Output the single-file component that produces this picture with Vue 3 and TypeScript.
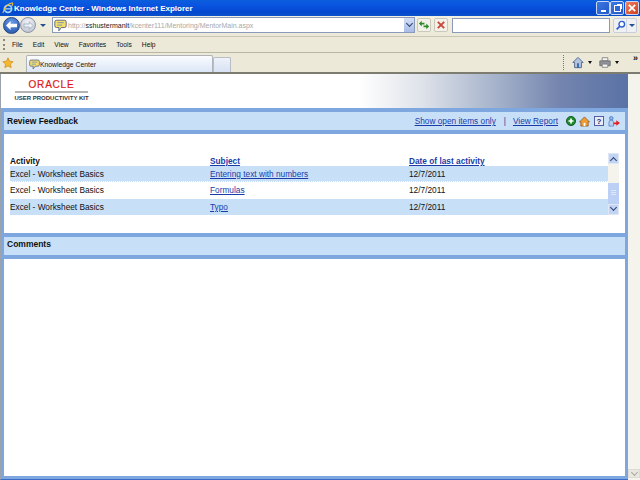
<script setup lang="ts">
interface Row {
  activity: string
  subject: string
  date: string
}

const rows: Row[] = [
  { activity: 'Excel - Worksheet Basics', subject: 'Entering text with numbers', date: '12/7/2011' },
  { activity: 'Excel - Worksheet Basics', subject: 'Formulas', date: '12/7/2011' },
  { activity: 'Excel - Worksheet Basics', subject: 'Typo', date: '12/7/2011' }
]

const menus = ['File', 'Edit', 'View', 'Favorites', 'Tools', 'Help']
</script>

<template>
  <div class="window">
    <div class="titlebar">
      <svg class="ie-logo" width="12" height="14" viewBox="0 0 14 14">
        <circle cx="7" cy="8" r="4.2" fill="none" stroke="#9fd4ff" stroke-width="2" />
        <path d="M3 8h8" stroke="#9fd4ff" stroke-width="1.5" />
        <path d="M1 13C2 7 7 2 12 1c1.5 1 0 3-1 4" fill="none" stroke="#f2c430" stroke-width="1.2" />
      </svg>
      <span class="title">Knowledge Center - Windows Internet Explorer</span>
      <div class="win-buttons">
        <span class="win-btn"><i class="min-mark"></i></span>
        <span class="win-btn"><i class="restore-mark"></i></span>
        <span class="win-btn close">
          <svg width="10" height="10" viewBox="0 0 11 11"><path d="M2 2l7 7M9 2l-7 7" stroke="#fff" stroke-width="2" /></svg>
        </span>
      </div>
    </div>

    <div class="addressbar">
      <div class="nav-pill">
        <span class="nav back">
          <svg width="13" height="11" viewBox="0 0 14 12"><path d="M1 6l5-5v3h7v4H6v3z" fill="#fff" /></svg>
        </span>
        <span class="nav forward">
          <svg width="11" height="9" viewBox="0 0 14 12"><path d="M13 6L8 1v3H1v4h7v3z" fill="#eef2f8" stroke="#9aa6b8" /></svg>
        </span>
      </div>
      <i class="arrow blue"></i>
      <div class="url-box">
        <svg class="bubble" width="13" height="13" viewBox="0 0 16 15">
          <path d="M3 1h10a2 2 0 012 2v5a2 2 0 01-2 2H9l-3 4v-4H3a2 2 0 01-2-2V3a2 2 0 012-2z" fill="#f5de6a" stroke="#44507a" />
          <path d="M4 4h8M4 7h6" stroke="#5a86c8" />
        </svg>
        <span class="url"><span class="dim">http://</span>sshustermanlt<span class="dim">/kcenter111/Mentoring/MentorMain.aspx</span></span>
        <span class="url-drop"><i class="chev"></i></span>
      </div>
      <span class="tool-btn">
        <svg width="12" height="12" viewBox="0 0 13 13"><path d="M1 5l3-3v2h3v2H4v2zM12 8L9 11V9H6V7h3V5z" fill="#2c8a2c" /></svg>
      </span>
      <span class="tool-btn">
        <svg width="10" height="10" viewBox="0 0 11 11"><path d="M2 2l7 7M9 2l-7 7" stroke="#c8453a" stroke-width="2" /></svg>
      </span>
      <div class="search-box"></div>
      <div class="search-btns">
        <span class="search-go">
          <svg width="11" height="11" viewBox="0 0 13 13">
            <circle cx="8" cy="5" r="3.3" fill="#fff" stroke="#2a5fd0" stroke-width="1.6" />
            <path d="M5.5 7.5L2 11" stroke="#2a5fd0" stroke-width="2" />
          </svg>
        </span>
        <span class="search-drop"><i class="arrow blue"></i></span>
      </div>
    </div>

    <div class="menubar">
      <i class="grip"></i>
      <span v-for="m in menus" :key="m" class="menu-item">{{ m }}</span>
    </div>

    <div class="tabbar">
      <svg class="star" width="12" height="12" viewBox="0 0 14 14">
        <path d="M7 1l1.8 3.9 4.2.5-3.1 2.9.8 4.2L7 10.4l-3.700 2.100.8-4.200L1 5.400l4.200-.5z" fill="#f5b82e" stroke="#c98a18" stroke-width=".8" />
      </svg>
      <div class="tab">
        <svg width="11" height="11" viewBox="0 0 16 15">
          <path d="M3 1h10a2 2 0 012 2v5a2 2 0 01-2 2H9l-3 4v-4H3a2 2 0 01-2-2V3a2 2 0 012-2z" fill="#f5de6a" stroke="#44507a" />
          <path d="M4 4h8M4 7h6" stroke="#5a86c8" />
        </svg>
        <span>Knowledge Center</span>
      </div>
      <div class="new-tab"></div>
      <div class="tab-tools">
        <i class="dots"></i>
        <svg width="12" height="13" viewBox="0 0 14 14">
          <path d="M1 7l6-6 6 6h-2v6H3V7z" fill="#b4c4de" stroke="#4a6088" />
          <path d="M6 8h2v5H6z" fill="#2a5fa8" />
        </svg>
        <i class="arrow black"></i>
        <svg class="printer" width="12" height="13" viewBox="0 0 15 14">
          <path d="M4 1h7v4H4z" fill="#f4f4f4" stroke="#777" />
          <path d="M1 5h13v6H1z" fill="#8e949c" stroke="#666" />
          <path d="M4 9h7v4H4z" fill="#f4f4f4" stroke="#777" />
        </svg>
        <i class="arrow black"></i>
        <span class="more">»</span>
      </div>
    </div>

    <div class="viewport">
      <div class="page">
        <div class="brand">
          <div class="logo">
            <span class="oracle">ORACLE</span>
            <span class="upk">USER PRODUCTIVITY KIT</span>
          </div>
        </div>

        <div class="panel-head">
          <b>Review Feedback</b>
          <div class="actions">
            <a>Show open items only</a>
            <span class="sep">|</span>
            <a>View Report</a>
            <div class="icons">
              <svg width="10" height="10" viewBox="0 0 12 12">
                <circle cx="6" cy="6" r="5.5" fill="#1d8a2c" stroke="#10501a" />
                <path d="M6 3v6M3 6h6" stroke="#fff" stroke-width="2" />
              </svg>
              <svg width="11" height="11" viewBox="0 0 12 12">
                <path d="M0.5 6.5L6 1l5.5 5.500H10V11H2V6.500z" fill="#ed9c35" stroke="#8a5414" stroke-width=".8" />
                <path d="M5 7.500h2V11H5z" fill="#fff" />
              </svg>
              <span class="help">?</span>
              <svg width="12" height="11" viewBox="0 0 13 12">
                <circle cx="3.5" cy="2.5" r="2" fill="#8fb4e8" stroke="#3a6cc0" stroke-width=".7" />
                <path d="M1 11V7a2.5 2.5 0 015 0v4z" fill="#b8d0f0" stroke="#3a6cc0" stroke-width=".7" />
                <path d="M6 7h3V4.500L13 7.500 9 10.500V9H6z" fill="#e02020" />
              </svg>
            </div>
          </div>
        </div>

        <div class="list-area">
          <div class="list">
            <div class="list-table">
              <div class="row head">
                <b>Activity</b>
                <a>Subject</a>
                <a>Date of last activity</a>
              </div>
              <div v-for="(row, i) in rows" :key="row.subject" class="row" :class="{ striped: i % 2 === 0 }">
                <span>{{ row.activity }}</span>
                <a>{{ row.subject }}</a>
                <span>{{ row.date }}</span>
              </div>
            </div>
            <div class="list-scroll">
              <span class="sb-btn"><i class="chev up"></i></span>
              <span class="sb-track"></span>
              <span class="sb-thumb"><i class="ridge"></i></span>
              <span class="sb-btn"><i class="chev"></i></span>
            </div>
          </div>
        </div>

        <div class="panel-head comments"><b>Comments</b></div>
        <div class="comments-body"></div>
      </div>

      <div class="page-scroll">
        <span class="page-sb-btn"><i class="chev grey"></i></span>
      </div>
    </div>
  </div>
</template>

<style>
html,
body {
  margin: 0;
  overflow: hidden;
}
</style>

<style scoped>
.window {
  width: 640px;
  height: 480px;
  display: flex;
  flex-direction: column;
  overflow: hidden;
  font-family: 'Liberation Sans', Arial, sans-serif;
  font-size: 8.3px;
  color: #111;
  background: #ece9d8;
}

.titlebar {
  height: 16px;
  flex-shrink: 0;
  display: flex;
  align-items: center;
  padding: 0 1px 0 2px;
  background: linear-gradient(#0a5fdc, #0a55e0 30%, #0447d0 75%, #0a50c8);
  color: #fff;
}

.ie-logo {
  flex-shrink: 0;
}

.title {
  font-size: 8px;
  font-weight: bold;
}

.win-buttons {
  margin-left: auto;
  display: flex;
  gap: 0;
}

.win-btn {
  width: 14px;
  height: 14px;
  box-sizing: border-box;
  display: flex;
  align-items: center;
  justify-content: center;
  border: 1px solid #c8d8f4;
  border-radius: 2px;
  background: linear-gradient(135deg, #3c78e4, #2358c8);
}

.win-btn.close {
  margin-left: 1px;
  background: linear-gradient(135deg, #ec8060, #d0401c);
}

.min-mark {
  width: 5px;
  height: 2px;
  margin-top: 6px;
  background: #fff;
}

.restore-mark {
  width: 5px;
  height: 5px;
  border: 1px solid #fff;
  box-shadow: 2px -2px 0 -1px #fff;
}

.addressbar {
  height: 21px;
  flex-shrink: 0;
  display: flex;
  align-items: center;
  padding: 0 3px 2px;
  background: linear-gradient(#f2f0e2, #ece9d8);
  border-bottom: 1px solid #c8c6b4;
  box-sizing: border-box;
}

.nav-pill {
  display: flex;
  align-items: center;
}

.nav {
  display: flex;
  align-items: center;
  justify-content: center;
  border-radius: 50%;
}

.nav.back {
  width: 17px;
  height: 17px;
  background: radial-gradient(circle at 50% 30%, #6a9ce8, #1f4fa8);
  border: 1px solid #27457e;
  box-sizing: border-box;
}

.nav.forward {
  width: 16px;
  height: 16px;
  background: radial-gradient(circle at 50% 30%, #f2f4f8, #b4bccc);
  border: 1px solid #8c96a8;
  box-sizing: border-box;
}

.arrow {
  display: inline-block;
  width: 0;
  height: 0;
  border-left: 3px solid transparent;
  border-right: 3px solid transparent;
}

.arrow.blue {
  border-top: 3px solid #27508e;
  margin: 0 6px 0 4px;
}

.arrow.black {
  border-top: 3px solid #111;
  border-left-width: 2px;
  border-right-width: 2px;
}

.url-box {
  width: 363px;
  height: 16px;
  flex-shrink: 0;
  display: flex;
  align-items: center;
  background: #fff;
  border: 1px solid #8a9ab8;
  box-sizing: border-box;
}

.bubble {
  margin: 0 1px;
  flex-shrink: 0;
}

.url {
  font-size: 7px;
  white-space: nowrap;
  color: #222;
}

.dim {
  color: #a8a8a8;
}

.url-drop {
  margin-left: auto;
  width: 10px;
  height: 14px;
  display: flex;
  align-items: center;
  justify-content: center;
  background: linear-gradient(#d4def4, #a8bce8);
}

.chev {
  width: 4px;
  height: 4px;
  margin-top: -3px;
  border-right: 1.5px solid #2a4070;
  border-bottom: 1.5px solid #2a4070;
  transform: rotate(45deg);
}

.chev.up {
  margin-top: 3px;
  transform: rotate(225deg);
}

.chev.grey {
  border-color: #a8a8a0;
}

.tool-btn {
  width: 14px;
  height: 14px;
  margin-left: 2px;
  box-sizing: border-box;
  display: flex;
  align-items: center;
  justify-content: center;
  background: #f4f2e8;
  border: 1px solid #c8c8bc;
  border-radius: 2px;
}

.tool-btn + .tool-btn {
  margin-left: 3px;
}

.search-box {
  width: 160px;
  height: 15px;
  margin-left: 4px;
  background: #fff;
  border: 1px solid #8a9ab8;
  box-sizing: border-box;
}

.search-btns {
  margin-left: 3px;
  display: flex;
  height: 15px;
  border: 1px solid #c8cedc;
  border-radius: 2px;
  box-sizing: border-box;
  background: #eef0f4;
}

.search-go {
  width: 12px;
  display: flex;
  align-items: center;
  justify-content: center;
}

.search-drop {
  width: 9px;
  display: flex;
  align-items: center;
  justify-content: center;
  border-left: 1px solid #d4d8e4;
}

.search-drop .arrow.blue {
  margin: 0;
}

.menubar {
  height: 16px;
  flex-shrink: 0;
  display: flex;
  align-items: center;
  padding-left: 3px;
  background: #ece9d8;
  border-bottom: 1px solid #b8b6a4;
  box-sizing: border-box;
  font-size: 6.7px;
}

.grip {
  width: 0;
  height: 11px;
  margin-right: 7px;
  border-left: 2px dotted #8a8878;
}

.menu-item {
  margin-right: 10px;
}

.tabbar {
  height: 21px;
  flex-shrink: 0;
  display: flex;
  align-items: flex-end;
  padding-left: 2px;
  background: #ece9d8;
  border-bottom: 2px solid #7c7c70;
  box-sizing: border-box;
}

.star {
  align-self: center;
  margin-right: 12px;
}

.tab {
  width: 187px;
  height: 17px;
  display: flex;
  align-items: center;
  padding-left: 2px;
  box-sizing: border-box;
  font-size: 6.8px;
  background: linear-gradient(#fafcff, #dbe6f6);
  border: 1px solid #b0b4b8;
  border-bottom: none;
  border-radius: 2px 2px 0 0;
}

.new-tab {
  width: 18px;
  height: 15px;
  background: linear-gradient(#eef2fa, #d8e2f4);
  border: 1px solid #b8bcc4;
  border-bottom: none;
  border-radius: 2px 2px 0 0;
  box-sizing: border-box;
}

.tab-tools {
  margin-left: auto;
  align-self: center;
  position: relative;
  display: flex;
  align-items: center;
  gap: 4px;
  padding-right: 21px;
}

.dots {
  height: 15px;
  margin-right: 4px;
  border-left: 1px dotted #777;
}

.printer {
  margin-left: 3px;
}

.more {
  position: absolute;
  right: 2px;
  top: -2px;
  font-size: 9px;
  font-weight: bold;
}

.viewport {
  flex: 1;
  min-height: 0;
  display: flex;
}

.page {
  flex: 1;
  min-width: 0;
  display: flex;
  flex-direction: column;
  background: #fff;
  border-left: 1px solid #9aa2ac;
  border-bottom: 1px solid #3c6cc8;
}

.page-scroll {
  width: 12px;
  display: flex;
  flex-direction: column;
  justify-content: flex-end;
  padding-bottom: 2px;
  background: #f4f3ec;
}

.page-sb-btn {
  height: 9px;
  display: flex;
  align-items: center;
  justify-content: center;
  background: #e8e8e0;
  border: 1px solid #dcdcd4;
  box-sizing: border-box;
}

.brand {
  height: 34px;
  flex-shrink: 0;
  padding-left: 14px;
  display: flex;
  align-items: center;
  background: linear-gradient(90deg, #fff 0, #fff 57%, #dfe3ea 67%, #a0aec8 80%, #7485af 89%, #5a72a6 100%);
}

.logo {
  width: 73px;
  display: flex;
  flex-direction: column;
  align-items: center;
}

.oracle {
  font-size: 10px;
  color: #e01818;
  -webkit-text-stroke: 0.2px #e01818;
  letter-spacing: 0.8px;
  line-height: 9px;
  padding-bottom: 2px;
  width: 100%;
  text-align: center;
  border-bottom: 2px solid #b4b4b4;
  margin-bottom: 1px;
}

.upk {
  font-size: 6px;
  font-weight: bold;
  white-space: nowrap;
  color: #333;
  line-height: 8px;
}

.panel-head {
  height: 26px;
  flex-shrink: 0;
  box-sizing: border-box;
  display: flex;
  align-items: center;
  justify-content: space-between;
  padding: 0 5px 0 3px;
  background: #c8dff8;
  border: solid #7ea7e0;
  border-width: 4px 3px 4px 3px;
}

.panel-head b {
  font-size: 8.5px;
}

.panel-head.comments {
  padding-bottom: 4px;
}

.actions {
  display: flex;
  align-items: center;
}

a {
  color: #1a3ca8;
  text-decoration: underline;
}

.sep {
  margin: 0 7px 0 8px;
  color: #1a3ca8;
}

.icons {
  display: flex;
  align-items: center;
  gap: 3px;
  margin-left: 8px;
}

.help {
  width: 10px;
  height: 10px;
  box-sizing: border-box;
  display: flex;
  align-items: center;
  justify-content: center;
  font-size: 8px;
  font-weight: bold;
  color: #1a2a70;
  background: #e8ecf8;
  border: 1px solid #5060a0;
  margin: 0 1px;
}

.list-area {
  height: 99px;
  flex-shrink: 0;
  box-sizing: border-box;
  padding: 19px 6px 0 6px;
  border-left: 3px solid #7ea7e0;
  border-right: 3px solid #7ea7e0;
}

.list {
  display: flex;
}

.list-table {
  flex: 1;
  min-width: 0;
}

.row {
  display: grid;
  grid-template-columns: 200px 199px 1fr;
  align-items: center;
  height: 16.33px;
  white-space: nowrap;
  border-bottom: 1px dotted #fff;
  box-sizing: border-box;
}

.row:last-child {
  border-bottom: none;
}

.row.head {
  height: 13px;
  align-items: end;
  border: none;
  line-height: 9px;
}

.row.head a {
  font-weight: bold;
}

.striped {
  background: #c8dff8;
}

.list-scroll {
  position: relative;
  width: 11px;
  flex-shrink: 0;
  display: flex;
  flex-direction: column;
  background: #f4f3ec;
}

.sb-btn {
  height: 11px;
  flex-shrink: 0;
  display: flex;
  align-items: center;
  justify-content: center;
  background: #c2d4f4;
  border: 1px solid #dfe6f4;
  box-sizing: border-box;
}

.sb-track {
  flex: 1;
}

.sb-thumb {
  position: absolute;
  left: 0;
  right: 0;
  bottom: 11px;
  height: 21px;
  display: flex;
  align-items: center;
  justify-content: center;
  background: #bcd0f6;
}

.ridge {
  width: 5px;
  height: 6px;
  background: repeating-linear-gradient(#dfe8fa 0, #dfe8fa 1px, transparent 1px, transparent 2px);
}

.comments-body {
  flex: 1;
  border-left: 3px solid #7ea7e0;
  border-right: 3px solid #7ea7e0;
  border-bottom: 3px solid #7ea7e0;
}
</style>
